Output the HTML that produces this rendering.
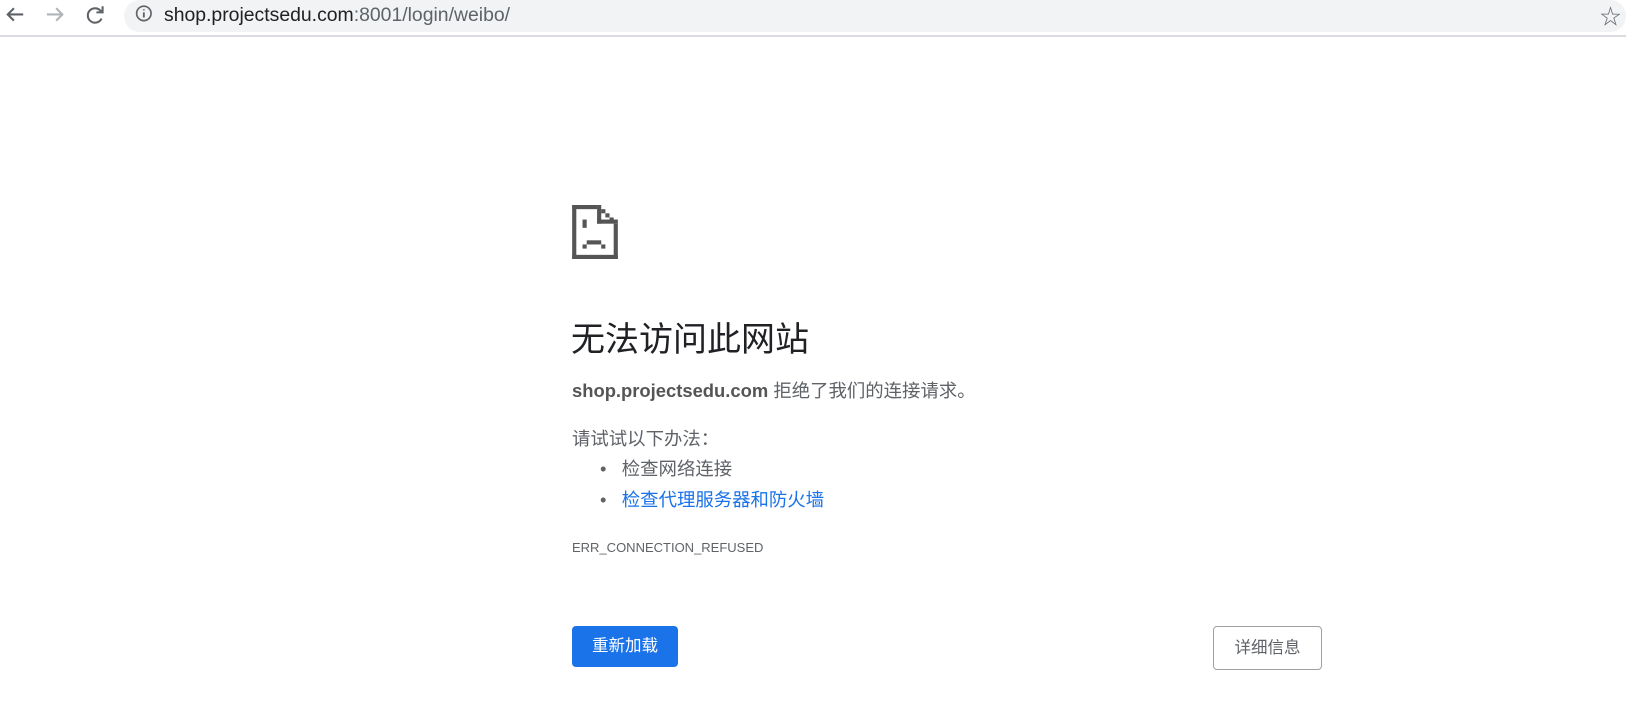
<!DOCTYPE html>
<html><head><meta charset="utf-8"><style>
body{margin:0;width:1626px;height:704px;background:#fff;font-family:"Liberation Sans","Noto Sans CJK SC",sans-serif;position:relative;overflow:hidden}
.bar{position:absolute;left:0;top:0;width:1626px;height:35px;background:#fff;border-bottom:2px solid #dadce0}
.omni{position:absolute;left:124px;top:0;width:1502px;height:32px;background:#f1f3f4;border-radius:16px}
.url{position:absolute;left:164px;top:4px;font-size:19.4px;color:#202124}
.url span{color:#5f6368}
.t{position:absolute;left:572px;color:#5f6368;white-space:nowrap}
h1{position:absolute;left:571px;top:312px;margin:0;font-weight:normal;font-size:34px;color:#202124;white-space:nowrap}
.btn{position:absolute;top:626px;height:41px;border-radius:4px;font-size:16.5px;box-sizing:border-box;text-align:center;line-height:41px}
</style></head><body>
<div class="bar">
<div class="omni"></div>
<svg style="position:absolute;left:0;top:0" width="166" height="33" viewBox="0 0 160 32" fill="none" stroke-width="2">
<path d="M22 14H7M13 8L7 14L13 20" stroke="#5f6368"/>
<path d="M45 14H60M54 8L60 14L54 20" stroke="#b0b3b7"/>
<path d="M98 12A7 7 0 1 0 98 18" stroke="#5f6368"/><path d="M99 6V12H93" stroke="#5f6368"/>
<circle cx="139" cy="13" r="7" stroke="#5f6368" stroke-width="1.6"/><path d="M139 12V17M139 9V10" stroke="#5f6368" stroke-width="1.8"/>
</svg>
<div class="url">shop.projectsedu.com<span>:8001/login/weibo/</span></div>
<div style="position:absolute;left:1600px;top:1px;font-size:21px;color:#5f6368">☆</div>
</div>
<svg style="position:absolute;left:572px;top:205px" width="46" height="54" viewBox="0 0 44 52" fill="#555">
<rect x="0" y="0" width="4" height="52"/>
<rect x="0" y="48" width="44" height="4"/>
<rect x="40" y="18" width="4" height="34"/>
<rect x="0" y="0" width="24" height="4"/>
<rect x="24" y="0" width="4" height="18"/>
<rect x="24" y="14" width="20" height="4"/>
<rect x="28" y="4" width="4" height="4"/>
<rect x="32" y="8" width="4" height="4"/>
<rect x="36" y="12" width="4" height="4"/>
<rect x="10" y="14" width="4" height="8"/>
<rect x="14" y="34" width="14" height="4"/>
<rect x="10" y="38" width="4" height="4"/>
<rect x="28" y="38" width="4" height="4"/>
</svg>
<h1>无法访问此网站</h1>
<div class="t" style="top:377px;font-size:18.4px"><b style="color:#555">shop.projectsedu.com</b> 拒绝了我们的连接请求。</div>
<div class="t" style="top:425px;font-size:18.4px">请试试以下办法：</div>
<div class="t" style="top:455px;left:600px;font-size:18.4px">•&nbsp;&nbsp;&nbsp;检查网络连接</div>
<div class="t" style="top:486px;left:600px;font-size:18.4px">•&nbsp;&nbsp;&nbsp;<span style="color:#1a73e8">检查代理服务器和防火墙</span></div>
<div class="t" style="top:540px;font-size:13px">ERR_CONNECTION_REFUSED</div>
<div class="btn" style="left:572px;width:106px;background:#1a73e8;color:#fff">重新加载</div>
<div class="btn" style="left:1213px;width:109px;border:1px solid #a0a0a0;color:#5f6368;background:#fff;line-height:42px;height:44px">详细信息</div>
</body></html>
